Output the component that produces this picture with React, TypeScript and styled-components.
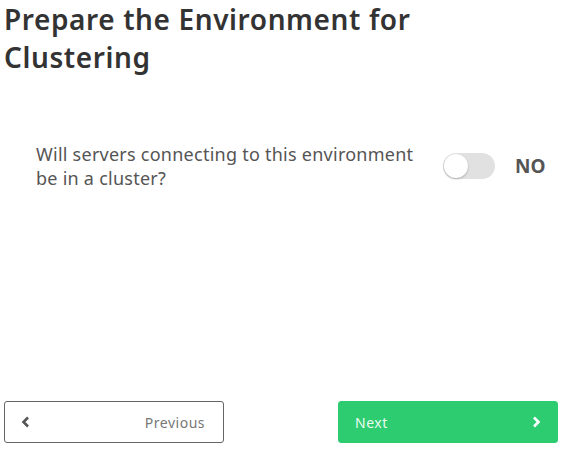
import React, { useState } from "react";
import styled, { createGlobalStyle } from "styled-components";

const GlobalStyle = createGlobalStyle`
  html, body {
    margin: 0;
    padding: 0;
    background: #fff;
  }
  body {
    font-family: "Noto Sans", "DejaVu Sans", sans-serif;
    color: #333;
  }
`;

const Page = styled.div`
  height: 450px;
  box-sizing: border-box;
  padding: 0 6px 7px 4px;
  display: flex;
  flex-direction: column;
`;

const Title = styled.h1`
  margin: 0;
  font-size: 28px;
  line-height: 38px;
  font-weight: 600;
  letter-spacing: 0.6px;
  color: #333;
  width: 430px;
`;

const Question = styled.div`
  margin-top: 66px;
  padding-left: 32px;
  display: flex;
  align-items: center;
`;

const Label = styled.div`
  width: 388px;
  font-size: 18px;
  line-height: 24px;
  letter-spacing: 0.25px;
  color: #555;
`;

const Track = styled.button<{ $on: boolean }>`
  position: relative;
  flex-shrink: 0;
  width: 52px;
  height: 26px;
  margin-left: 19px;
  padding: 0;
  border: none;
  border-radius: 13px;
  background: ${(p) => (p.$on ? "#2ecc71" : "#e1e1e1")};
  cursor: pointer;
`;

const Knob = styled.span<{ $on: boolean }>`
  position: absolute;
  top: 1px;
  left: ${(p) => (p.$on ? "27px" : "1px")};
  width: 24px;
  height: 24px;
  border-radius: 50%;
  background: #fff;
  box-shadow: 0 1px 2px rgba(0, 0, 0, 0.25);
`;

const State = styled.span`
  margin-left: 20px;
  font-size: 19px;
  font-weight: 700;
  color: #555;
`;

const Footer = styled.div`
  margin-top: auto;
  display: flex;
  justify-content: space-between;
`;

const NavButton = styled.button<{ $primary?: boolean }>`
  width: 220px;
  height: 42px;
  box-sizing: border-box;
  display: flex;
  align-items: center;
  justify-content: space-between;
  padding: 0 16px;
  border-radius: 3px;
  font-family: inherit;
  font-size: 14px;
  letter-spacing: 0.5px;
  cursor: pointer;
  border: 1px solid ${(p) => (p.$primary ? "#2ecc71" : "#666")};
  background: ${(p) => (p.$primary ? "#2ecc71" : "#fff")};
  color: ${(p) => (p.$primary ? "#e9fbef" : "#777")};
`;

const Chevron = ({ dir, color }: { dir: "left" | "right"; color: string }) => (
  <svg width="10" height="12" viewBox="0 0 10 12">
    <path
      d={dir === "left" ? "M7 1.5 L2.5 6 L7 10.5" : "M3 1.5 L7.5 6 L3 10.5"}
      fill="none"
      stroke={color}
      strokeWidth="2.6"
    />
  </svg>
);

const App = () => {
  const [cluster, setCluster] = useState(false);

  return (
    <Page>
      <GlobalStyle />
      <Title>Prepare the Environment for Clustering</Title>
      <Question>
        <Label>Will servers connecting to this environment be in a cluster?</Label>
        <Track $on={cluster} onClick={() => setCluster(!cluster)}>
          <Knob $on={cluster} />
        </Track>
        <State>{cluster ? "YES" : "NO"}</State>
      </Question>
      <Footer>
        <NavButton>
          <Chevron dir="left" color="#555" />
          <span style={{ marginRight: 2 }}>Previous</span>
        </NavButton>
        <NavButton $primary>
          <span>Next</span>
          <Chevron dir="right" color="#fff" />
        </NavButton>
      </Footer>
    </Page>
  );
};

export default App;
